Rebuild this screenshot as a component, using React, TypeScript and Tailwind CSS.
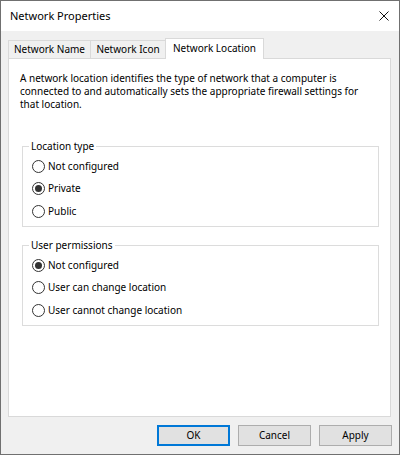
import React from "react";

const Radio = ({ checked, label, className = "" }: { checked?: boolean; label: string; className?: string }) => {
  return (
    <div className={`flex items-center h-[22px] pl-[9px] ${className}`}>
      <svg width="13" height="13" viewBox="0 0 13 13" className="shrink-0">
        <circle cx="6.5" cy="6.5" r="6" fill="#fff" stroke="#333" strokeWidth="1" />
        {checked && <circle cx="6.5" cy="6.5" r="3.5" fill="#333" />}
      </svg>
      <span className="ml-[3px] text-black">{label}</span>
    </div>
  );
};

const Group = ({ title, children, className = "" }: { title: string; children: React.ReactNode; className?: string }) => {
  return (
    <fieldset className={`border border-[#dcdcdc] ml-[13px] mr-[11px] h-[87px] ${className}`}>
      <legend className="ml-[6px] px-[2px] leading-[13px] text-black">{title}</legend>
      <div className="mt-[2px] flex flex-col">{children}</div>
    </fieldset>
  );
};

const Tab = ({ label, active, className = "" }: { label: string; active?: boolean; className?: string }) => {
  return (
    <div
      className={`flex items-center justify-center border-t border-x border-[#d9d9d9] ${
        active ? "h-[21px] -mb-px bg-white relative z-10 pb-[2px]" : "h-[18px] bg-[#f0f0f0]"
      } ${className}`}
    >
      {label}
    </div>
  );
};

const Button = ({ label, primary }: { label: string; primary?: boolean }) => {
  return (
    <button
      className={`w-[73px] h-[21px] bg-[#e1e1e1] flex items-center justify-center text-black ${
        primary ? "border-2 border-[#0078d7]" : "border border-[#adadad]"
      }`}
    >
      {label}
    </button>
  );
};

export default function App() {
  return (
    <div className="w-[400px] h-[455px] border border-[#707070] bg-[#f0f0f0] flex flex-col font-['Noto_Sans',sans-serif] text-[10px] text-black">
      <div className="h-[30px] bg-white flex items-center justify-between pl-[9px] pr-[10px]">
        <span className="text-[11px]">Network Properties</span>
        <svg width="10" height="10" viewBox="0 0 10 10">
          <path d="M0.5 0.5 L9.5 9.5 M9.5 0.5 L0.5 9.5" stroke="#111" strokeWidth="1" />
        </svg>
      </div>

      <div className="flex-1 flex flex-col pl-[7px] pr-[7px] pt-[7px]">
        <div className="h-[20px] flex items-end">
          <Tab label="Network Name" className="w-[83px]" />
          <Tab label="Network Icon" className="w-[76px] -ml-px" />
          <Tab label="Network Location" active className="w-[99px] -ml-px" />
        </div>

        <div className="w-[383px] h-[359px] bg-white border border-[#d9d9d9] pt-[13px]">
          <p className="pl-[11px] leading-[13px] whitespace-nowrap">
            A network location identifies the type of network that a computer is
            <br />
            connected to and automatically sets the appropriate firewall settings for
            <br />
            that location.
          </p>

          <Group title="Location type" className="mt-[29px]">
            <Radio label="Not configured" />
            <Radio label="Private" checked />
            <Radio label="Public" className="mt-[1px]" />
          </Group>

          <Group title="User permissions" className="mt-[12px]">
            <Radio label="Not configured" checked />
            <Radio label="User can change location" />
            <Radio label="User cannot change location" className="mt-[1px]" />
          </Group>
        </div>

        <div className="mt-[8px] flex justify-end gap-[8px]">
          <Button label="OK" primary />
          <Button label="Cancel" />
          <Button label="Apply" />
        </div>
      </div>
    </div>
  );
}
